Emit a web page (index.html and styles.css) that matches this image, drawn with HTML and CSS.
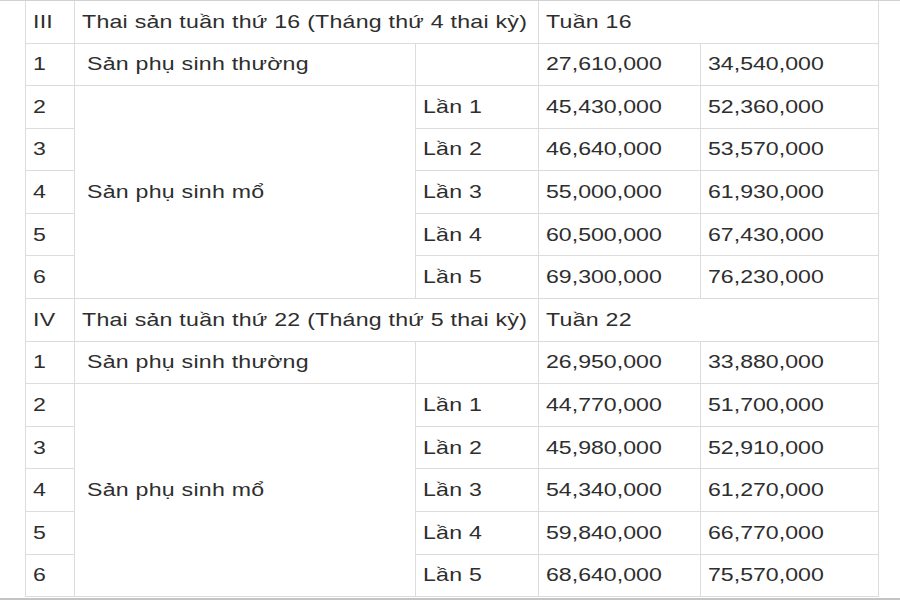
FILE: index.html
```html
<!DOCTYPE html>
<html lang="vi">
<head>
<meta charset="utf-8">
<link rel="stylesheet" href="styles.css">
</head>
<body>
<div class="sheet">
<table class="price">
  <colgroup>
    <col class="c-no"><col class="c-name"><col class="c-times"><col class="c-a"><col class="c-b">
  </colgroup>
  <tr class="sec"><td><span class="t">III</span></td><td colspan="2"><span class="t">Thai sản tuần thứ 16 (Tháng thứ 4 thai kỳ)</span></td><td colspan="2"><span class="t">Tuần 16</span></td></tr>
  <tr><td><span class="t">1</span></td><td class="ind"><span class="t">Sản phụ sinh thường</span></td><td></td><td class="num"><span class="t">27,610,000</span></td><td class="num"><span class="t">34,540,000</span></td></tr>
  <tr><td><span class="t">2</span></td><td class="ind" rowspan="5"><span class="t">Sản phụ sinh mổ</span></td><td><span class="t">Lần 1</span></td><td class="num"><span class="t">45,430,000</span></td><td class="num"><span class="t">52,360,000</span></td></tr>
  <tr><td><span class="t">3</span></td><td><span class="t">Lần 2</span></td><td class="num"><span class="t">46,640,000</span></td><td class="num"><span class="t">53,570,000</span></td></tr>
  <tr><td><span class="t">4</span></td><td><span class="t">Lần 3</span></td><td class="num"><span class="t">55,000,000</span></td><td class="num"><span class="t">61,930,000</span></td></tr>
  <tr><td><span class="t">5</span></td><td><span class="t">Lần 4</span></td><td class="num"><span class="t">60,500,000</span></td><td class="num"><span class="t">67,430,000</span></td></tr>
  <tr><td><span class="t">6</span></td><td><span class="t">Lần 5</span></td><td class="num"><span class="t">69,300,000</span></td><td class="num"><span class="t">76,230,000</span></td></tr>
  <tr class="sec"><td><span class="t">IV</span></td><td colspan="2"><span class="t">Thai sản tuần thứ 22 (Tháng thứ 5 thai kỳ)</span></td><td colspan="2"><span class="t">Tuần 22</span></td></tr>
  <tr><td><span class="t">1</span></td><td class="ind"><span class="t">Sản phụ sinh thường</span></td><td></td><td class="num"><span class="t">26,950,000</span></td><td class="num"><span class="t">33,880,000</span></td></tr>
  <tr><td><span class="t">2</span></td><td class="ind" rowspan="5"><span class="t">Sản phụ sinh mổ</span></td><td><span class="t">Lần 1</span></td><td class="num"><span class="t">44,770,000</span></td><td class="num"><span class="t">51,700,000</span></td></tr>
  <tr><td><span class="t">3</span></td><td><span class="t">Lần 2</span></td><td class="num"><span class="t">45,980,000</span></td><td class="num"><span class="t">52,910,000</span></td></tr>
  <tr><td><span class="t">4</span></td><td><span class="t">Lần 3</span></td><td class="num"><span class="t">54,340,000</span></td><td class="num"><span class="t">61,270,000</span></td></tr>
  <tr><td><span class="t">5</span></td><td><span class="t">Lần 4</span></td><td class="num"><span class="t">59,840,000</span></td><td class="num"><span class="t">66,770,000</span></td></tr>
  <tr><td><span class="t">6</span></td><td><span class="t">Lần 5</span></td><td class="num"><span class="t">68,640,000</span></td><td class="num"><span class="t">75,570,000</span></td></tr>
</table>
</div>
</body>
</html>
```
FILE: styles.css
```css
html, body {
  margin: 0;
  padding: 0;
  background: #fff;
}
.sheet {
  width: 900px;
  height: 600px;
  box-sizing: border-box;
  border-top: 1px solid #d2d2d2;
  border-bottom: 2px solid #c4c4c4;
  overflow: hidden;
}
.price {
  margin-left: 25px;
  width: 853px;
  border-collapse: collapse;
  table-layout: fixed;
  font-family: "Liberation Sans", Arial, sans-serif;
  font-size: 18.5px;
  letter-spacing: 0.2px;
  color: #2e2e2e;
}
.c-no { width: 49px; }
.c-name { width: 341px; }
.c-times { width: 123px; }
.c-a { width: 162px; }
.c-b { width: 178px; }
.price tr { height: 42.6px; }
.price tr:first-child { height: 42px; }
.price td {
  border: 1px solid #dcdcdc;
  padding: 0 0 0 7px;
  vertical-align: middle;
  white-space: nowrap;
  overflow: visible;
}
.price tr:first-child td { border-top: none; }
.price td.ind { padding-left: 12px; }
.price td.num { letter-spacing: 0; }
.t {
  display: inline-block;
  transform: scaleX(1.25);
  transform-origin: left center;
}
```
